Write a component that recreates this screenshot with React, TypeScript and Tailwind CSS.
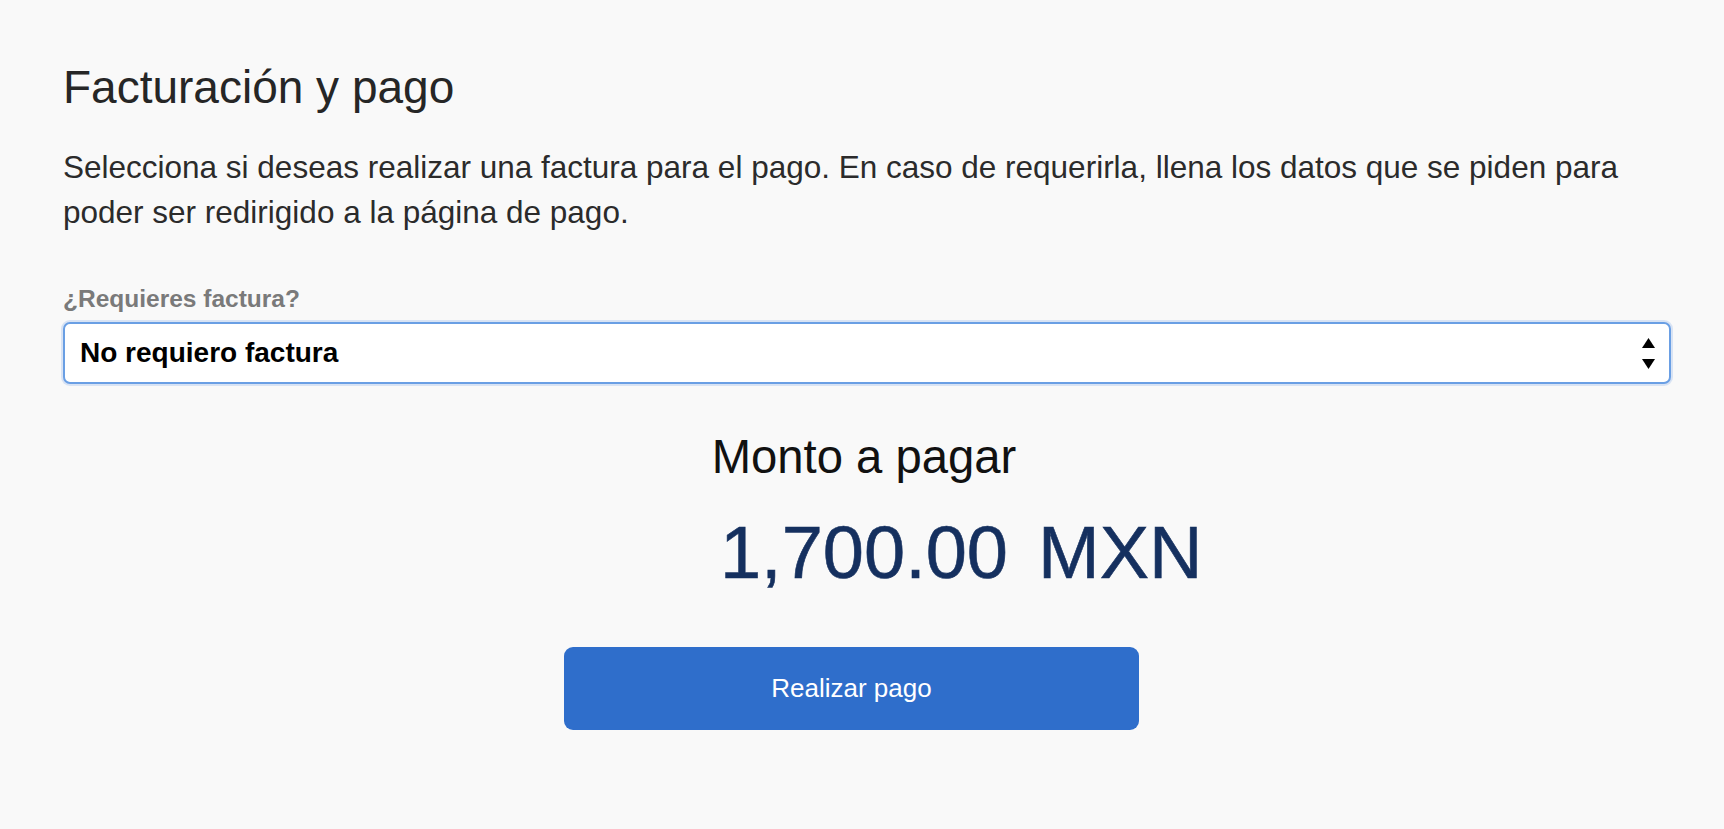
import { useState } from 'react';

const PaymentSummary = () => {
  const [invoice] = useState('No requiero factura');
  const amount = '1,700.00';

  return (
    <div className="min-h-screen bg-[#f9f9f9] font-['Liberation_Sans',Arial,sans-serif]">
      <div className="pl-[63px] pr-[53px] pt-[64px] pb-16">
        {/* Header */}
        <h1 className="text-[46px] leading-[46px] font-normal text-[#262626]">Facturación y pago</h1>
        <p className="mt-[35px] text-[31.5px] leading-[45px] text-[#2b2b2b]">
          Selecciona si deseas realizar una factura para el pago. En caso de requerirla, llena los datos que se piden para poder ser redirigido a la página de pago.
        </p>

        {/* Invoice select */}
        <label className="mt-[50px] block text-[24.5px] leading-[28px] font-bold text-[#7a7a7a]">¿Requieres factura?</label>
        <div className="mt-[9px] h-[62px] flex items-center justify-between rounded-[7px] border-2 border-[#6a9fe4] bg-white pl-[15px] pr-[14px] shadow-[0_0_0_2px_rgba(120,165,230,0.25)]">
          <span className="text-[28px] font-bold text-black">{invoice}</span>
          <svg width="13" height="32" viewBox="0 0 13 32" className="text-black">
            <path d="M6.5 1 L13 11 L0 11 Z" fill="currentColor" />
            <path d="M0 22 L13 22 L6.5 32 Z" fill="currentColor" />
          </svg>
        </div>

        {/* Total */}
        <div className="pr-[6px]">
          <div className="mt-[49px] text-center text-[47.25px] leading-[47px] text-[#111]">Monto a pagar</div>
          <div className="mt-[36px] grid grid-cols-[1fr_auto_1fr] text-[74px] leading-[74px] text-[#15305f] [-webkit-text-stroke:0.6px_#15305f]">
            <span />
            <span>{amount}</span>
            <span className="pl-[30px]">MXN</span>
          </div>
        </div>

        {/* Pay button */}
        <div className="mt-[57px] flex justify-center pr-[31px]">
          <button className="h-[83px] w-[575px] rounded-[9px] bg-[#2f6ecb] text-[26px] text-white">
            Realizar pago
          </button>
        </div>
      </div>
    </div>
  );
};

export default function App() {
  return <PaymentSummary />;
}
